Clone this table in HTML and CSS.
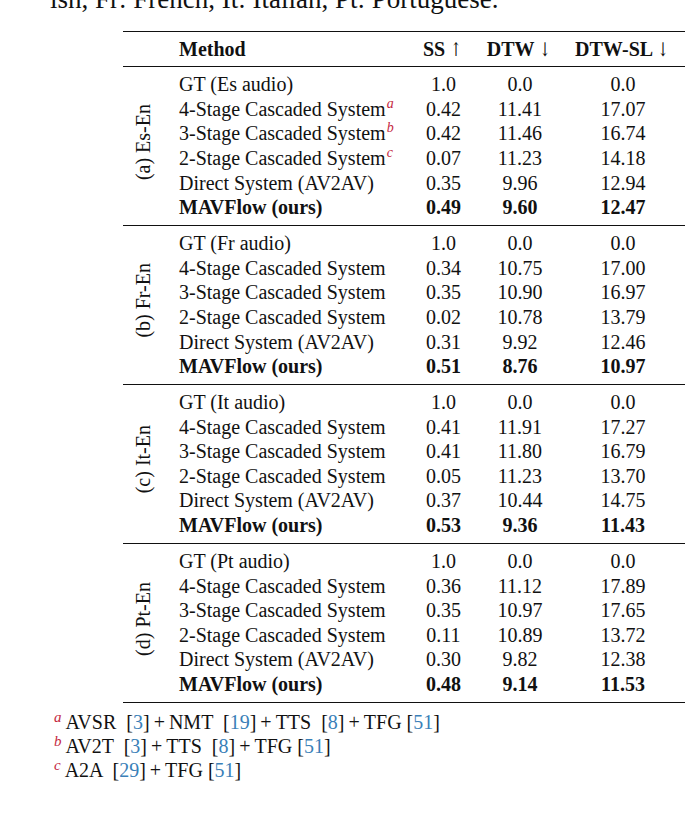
FILE: index.html
```html
<!DOCTYPE html>
<html>
<head>
<meta charset="utf-8">
<link rel="stylesheet" href="styles.css">
</head>
<body>
<div class="page">
  <p class="lead">ish, Fr: French, It: Italian, Pt: Portuguese.</p>
  <table class="results">
    <colgroup>
      <col class="c-lab"><col class="c-method"><col class="c-ss"><col class="c-dtw"><col class="c-sl">
    </colgroup>
    <thead>
      <tr>
        <th></th>
        <th class="method">Method</th>
        <th>SS <span class="arr">↑</span></th>
        <th>DTW <span class="arr">↓</span></th>
        <th class="sl">DTW-SL <span class="arr">↓</span></th>
      </tr>
    </thead>
    <tbody>
      <tr class="first"><td class="lab" rowspan="6"><span class="rot">(a) Es-En</span></td><td class="method">GT (Es audio)</td><td>1.0</td><td>0.0</td><td class="sl">0.0</td></tr>
      <tr><td class="method">4-Stage Cascaded System<sup class="mk">a</sup></td><td>0.42</td><td>11.41</td><td class="sl">17.07</td></tr>
      <tr><td class="method">3-Stage Cascaded System<sup class="mk">b</sup></td><td>0.42</td><td>11.46</td><td class="sl">16.74</td></tr>
      <tr><td class="method">2-Stage Cascaded System<sup class="mk">c</sup></td><td>0.07</td><td>11.23</td><td class="sl">14.18</td></tr>
      <tr><td class="method">Direct System (AV2AV)</td><td>0.35</td><td>9.96</td><td class="sl">12.94</td></tr>
      <tr class="last best"><td class="method">MAVFlow (ours)</td><td>0.49</td><td>9.60</td><td class="sl">12.47</td></tr>
    </tbody>
    <tbody>
      <tr class="first"><td class="lab" rowspan="6"><span class="rot">(b) Fr-En</span></td><td class="method">GT (Fr audio)</td><td>1.0</td><td>0.0</td><td class="sl">0.0</td></tr>
      <tr><td class="method">4-Stage Cascaded System</td><td>0.34</td><td>10.75</td><td class="sl">17.00</td></tr>
      <tr><td class="method">3-Stage Cascaded System</td><td>0.35</td><td>10.90</td><td class="sl">16.97</td></tr>
      <tr><td class="method">2-Stage Cascaded System</td><td>0.02</td><td>10.78</td><td class="sl">13.79</td></tr>
      <tr><td class="method">Direct System (AV2AV)</td><td>0.31</td><td>9.92</td><td class="sl">12.46</td></tr>
      <tr class="last best"><td class="method">MAVFlow (ours)</td><td>0.51</td><td>8.76</td><td class="sl">10.97</td></tr>
    </tbody>
    <tbody>
      <tr class="first"><td class="lab" rowspan="6"><span class="rot">(c) It-En</span></td><td class="method">GT (It audio)</td><td>1.0</td><td>0.0</td><td class="sl">0.0</td></tr>
      <tr><td class="method">4-Stage Cascaded System</td><td>0.41</td><td>11.91</td><td class="sl">17.27</td></tr>
      <tr><td class="method">3-Stage Cascaded System</td><td>0.41</td><td>11.80</td><td class="sl">16.79</td></tr>
      <tr><td class="method">2-Stage Cascaded System</td><td>0.05</td><td>11.23</td><td class="sl">13.70</td></tr>
      <tr><td class="method">Direct System (AV2AV)</td><td>0.37</td><td>10.44</td><td class="sl">14.75</td></tr>
      <tr class="last best"><td class="method">MAVFlow (ours)</td><td>0.53</td><td>9.36</td><td class="sl">11.43</td></tr>
    </tbody>
    <tbody class="final">
      <tr class="first"><td class="lab" rowspan="6"><span class="rot">(d) Pt-En</span></td><td class="method">GT (Pt audio)</td><td>1.0</td><td>0.0</td><td class="sl">0.0</td></tr>
      <tr><td class="method">4-Stage Cascaded System</td><td>0.36</td><td>11.12</td><td class="sl">17.89</td></tr>
      <tr><td class="method">3-Stage Cascaded System</td><td>0.35</td><td>10.97</td><td class="sl">17.65</td></tr>
      <tr><td class="method">2-Stage Cascaded System</td><td>0.11</td><td>10.89</td><td class="sl">13.72</td></tr>
      <tr><td class="method">Direct System (AV2AV)</td><td>0.30</td><td>9.82</td><td class="sl">12.38</td></tr>
      <tr class="last best"><td class="method">MAVFlow (ours)</td><td>0.48</td><td>9.14</td><td class="sl">11.53</td></tr>
    </tbody>
  </table>
  <div class="notes">
    <div class="note"><sup class="fmk">a</sup>AVSR <span class="ref">[<a>3</a>]</span><span class="op">+</span>NMT <span class="ref">[<a>19</a>]</span><span class="op">+</span>TTS <span class="ref">[<a>8</a>]</span><span class="op">+</span>TFG [<a>51</a>]</div>
    <div class="note"><sup class="fmk">b</sup>AV2T <span class="ref">[<a>3</a>]</span><span class="op">+</span>TTS <span class="ref">[<a>8</a>]</span><span class="op">+</span>TFG [<a>51</a>]</div>
    <div class="note"><sup class="fmk">c</sup>A2A <span class="ref">[<a>29</a>]</span><span class="op">+</span>TFG [<a>51</a>]</div>
  </div>
</div>
</body>
</html>
```

FILE: styles.css
```css
html, body {
  margin: 0;
  padding: 0;
  background: #ffffff;
}
body {
  font-family: "Liberation Serif", "Times New Roman", serif;
  color: #111111;
  overflow: hidden;
}
.page {
  width: 691px;
  height: 813px;
  overflow: hidden;
}
.lead {
  margin: -16px 0 0 50px;
  font-size: 27px;
  line-height: 30px;
  white-space: nowrap;
}
.results {
  margin: 17px 0 0 123px;
  width: 562px;
  border-collapse: collapse;
  table-layout: fixed;
  font-size: 20px;
}
.c-lab { width: 40px; }
.c-method { width: 252px; }
.c-ss { width: 57px; }
.c-dtw { width: 96px; }
.c-sl { width: 117px; }
.results thead tr {
  border-top: 1.6px solid #111;
  border-bottom: 1px solid #111;
}
.results th {
  height: 34px;
  padding: 0;
  font-weight: bold;
  text-align: center;
  vertical-align: middle;
  white-space: nowrap;
}
.results th.method,
.results td.method {
  text-align: left;
  padding-left: 16px;
}
.arr {
  font-weight: normal;
  font-family: "DejaVu Serif", serif;
  font-size: 19px;
  display: inline-block;
  transform: scaleX(0.7);
  margin-left: -2px;
}
.results th.sl,
.results td.sl {
  padding-right: 7px;
}
.results tbody {
  border-bottom: 1px solid #111;
}
.results tbody.final {
  border-bottom: 1.6px solid #111;
}
.results td {
  height: 24.6px;
  line-height: 24.6px;
  padding: 0;
  text-align: center;
  vertical-align: middle;
  white-space: nowrap;
}
.results tr.first td {
  padding-top: 5.2px;
}
.results tr.last td {
  padding-bottom: 5.2px;
}
.results td.lab {
  padding: 0 0 8px 0;
  vertical-align: middle;
  text-align: center;
}
.rot {
  display: inline-block;
  writing-mode: vertical-rl;
  transform: rotate(180deg);
  line-height: 20px;
}
.best td {
  font-weight: bold;
}
.mk {
  font-style: italic;
  color: #c4283f;
  font-size: 14px;
  line-height: 0;
  vertical-align: 8px;
  margin-left: 1px;
}
.notes {
  margin: 7px 0 0 54px;
  font-size: 20px;
  line-height: 24px;
}
.note {
  white-space: nowrap;
}
.fmk {
  font-style: italic;
  color: #c4283f;
  font-size: 15px;
  line-height: 0;
  vertical-align: 7px;
  margin-right: 4px;
}
.ref {
  margin-left: 5px;
}
.note a {
  color: #3a7fb8;
}
.op {
  margin: 0 4px;
}
```
